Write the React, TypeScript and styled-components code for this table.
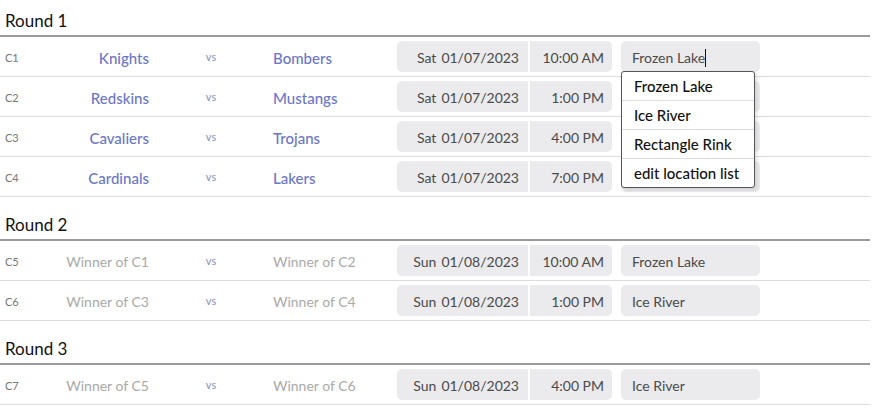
import React from "react";
import styled, { createGlobalStyle } from "styled-components";

const GlobalStyle = createGlobalStyle`
  body {
    margin: 0;
    background: #fff;
    font-family: "Source Sans Pro", Lato, "Open Sans", sans-serif;
  }
`;

// Page layout
const Page = styled.div`
  width: 870px;
  padding-top: 9px;
`;

const Round = styled.section`
  & + & {
    margin-top: 16px;
  }
`;

const RoundTitle = styled.h2`
  margin: 0;
  padding: 0 0 2px 5px;
  height: 24px;
  line-height: 24px;
  font-size: 17px;
  font-weight: 400;
  color: #111;
  border-bottom: 2px solid #9a9a9a;
`;

const Row = styled.div`
  display: grid;
  grid-template-columns: 60px 89px 124px 124px 131px 84px 148px 1fr;
  align-items: center;
  height: 39px;
  border-bottom: 1px solid #dcdcdc;
`;

const Code = styled.span`
  padding-left: 5px;
  padding-top: 1px;
  font-size: 11px;
  color: #777;
`;

const Team = styled.span<{ $tbd?: boolean; $home?: boolean }>`
  white-space: nowrap;
  padding-top: 2px;
  text-align: ${({ $home }) => ($home ? "right" : "left")};
  font-size: ${({ $tbd }) => ($tbd ? "14px" : "15px")};
  color: ${({ $tbd }) => ($tbd ? "#a9a9a9" : "#6a76c9")};
  font-weight: ${({ $tbd }) => ($tbd ? 400 : 500)};
`;

const Vs = styled.span`
  text-align: center;
  font-size: 11px;
  color: #8a90c4;
`;

const Box = styled.div<{ $kind: "date" | "time" | "loc" }>`
  height: 31px;
  line-height: 33px;
  background: #ebebee;
  font-size: 14px;
  color: #4a4a4a;
  box-sizing: border-box;
  white-space: nowrap;
  position: relative;
  text-align: ${({ $kind }) => ($kind === "loc" ? "left" : "right")};
  padding: ${({ $kind }) => ($kind === "loc" ? "0 0 0 11px" : $kind === "date" ? "0 9px 0 0" : "0 8px 0 0")};
  border-radius: ${({ $kind }) =>
    $kind === "date" ? "5px 0 0 5px" : $kind === "time" ? "0 5px 5px 0" : "5px"};
  margin-left: ${({ $kind }) => ($kind === "time" ? "2px" : $kind === "loc" ? "9px" : "0")};
  width: ${({ $kind }) => ($kind === "time" ? "82px" : $kind === "loc" ? "139px" : "131px")};
`;

const Day = styled.span`
  margin-right: 5px;
`;

const Caret = styled.span`
  display: inline-block;
  width: 1px;
  height: 18px;
  background: #111;
  vertical-align: -4px;
`;

// Location dropdown
const Menu = styled.ul`
  position: absolute;
  top: 30px;
  left: 0;
  width: 132px;
  margin: 0;
  padding: 0;
  list-style: none;
  background: #fff;
  border: 1px solid #555;
  border-radius: 3px;
  box-shadow: 2px 2px 4px rgba(0, 0, 0, 0.12);
  z-index: 5;
`;

const MenuItem = styled.li`
  height: 28px;
  line-height: 28px;
  padding-left: 12px;
  font-size: 15px;
  font-weight: 500;
  color: #111;
  & + & {
    border-top: 1px solid #ddd;
  }
`;

type Game = {
  code: string;
  home: string;
  away: string;
  day: string;
  date: string;
  time: string;
  loc: string;
  tbd?: boolean;
  open?: boolean;
};

const rounds: { title: string; games: Game[] }[] = [
  {
    title: "Round 1",
    games: [
      { code: "C1", home: "Knights", away: "Bombers", day: "Sat", date: "01/07/2023", time: "10:00 AM", loc: "Frozen Lake", open: true },
      { code: "C2", home: "Redskins", away: "Mustangs", day: "Sat", date: "01/07/2023", time: "1:00 PM", loc: "" },
      { code: "C3", home: "Cavaliers", away: "Trojans", day: "Sat", date: "01/07/2023", time: "4:00 PM", loc: "" },
      { code: "C4", home: "Cardinals", away: "Lakers", day: "Sat", date: "01/07/2023", time: "7:00 PM", loc: "" },
    ],
  },
  {
    title: "Round 2",
    games: [
      { code: "C5", home: "Winner of C1", away: "Winner of C2", day: "Sun", date: "01/08/2023", time: "10:00 AM", loc: "Frozen Lake", tbd: true },
      { code: "C6", home: "Winner of C3", away: "Winner of C4", day: "Sun", date: "01/08/2023", time: "1:00 PM", loc: "Ice River", tbd: true },
    ],
  },
  {
    title: "Round 3",
    games: [
      { code: "C7", home: "Winner of C5", away: "Winner of C6", day: "Sun", date: "01/08/2023", time: "4:00 PM", loc: "Ice River", tbd: true },
    ],
  },
];

const locations = ["Frozen Lake", "Ice River", "Rectangle Rink", "edit location list"];

const App = () => {
  return (
    <>
      <GlobalStyle />
      <Page>
        {rounds.map((r) => (
          <Round key={r.title}>
            <RoundTitle>{r.title}</RoundTitle>
            {r.games.map((g) => (
              <Row key={g.code}>
                <Code>{g.code}</Code>
                <Team $home $tbd={g.tbd}>{g.home}</Team>
                <Vs>vs</Vs>
                <Team $tbd={g.tbd}>{g.away}</Team>
                <Box $kind="date">
                  <Day>{g.day}</Day>
                  {g.date}
                </Box>
                <Box $kind="time">{g.time}</Box>
                <Box $kind="loc">
                  {g.loc}
                  {g.open && <Caret />}
                  {g.open && (
                    <Menu>
                      {locations.map((l) => (
                        <MenuItem key={l}>{l}</MenuItem>
                      ))}
                    </Menu>
                  )}
                </Box>
                <span />
              </Row>
            ))}
          </Round>
        ))}
      </Page>
    </>
  );
};

export default App;
